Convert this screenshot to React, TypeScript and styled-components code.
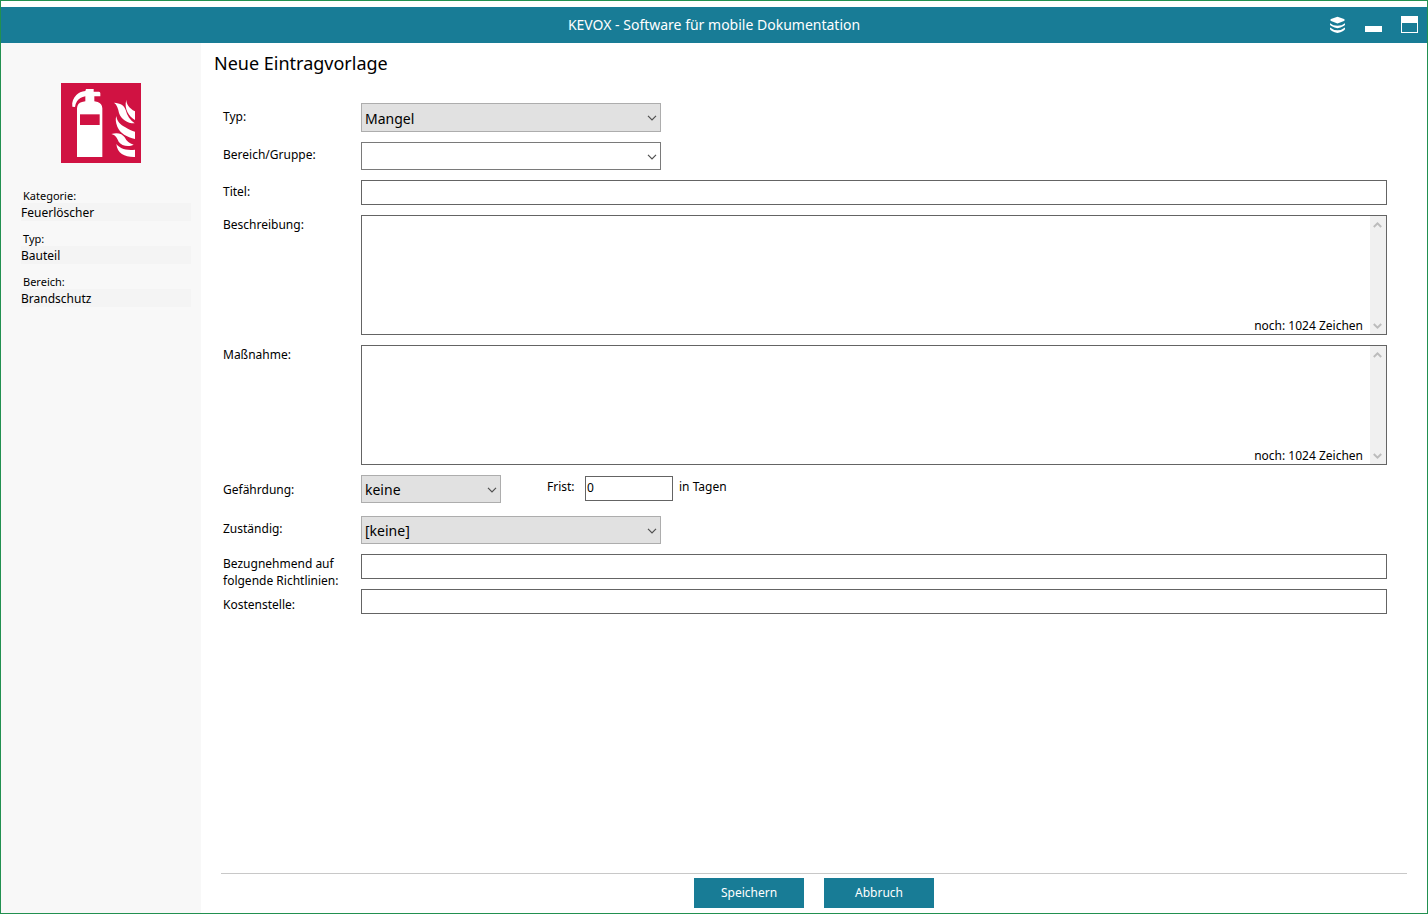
import React from "react";
import styled, { createGlobalStyle } from "styled-components";

const GlobalStyle = createGlobalStyle`
  *, *::before, *::after { box-sizing: border-box; }
  body { margin: 0; background: #fff; }
  body, button, input, select, textarea {
    font-family: "Noto Sans", "Open Sans", sans-serif;
    color: #000;
  }
`;

const teal = "#187c96";

const Window = styled.div`
  min-height: 100vh;
  display: flex;
  flex-direction: column;
  padding-top: 6px;
  border: 1px solid #229050;
`;

const TitleBar = styled.header`
  display: grid;
  grid-template-columns: 1fr auto 1fr;
  align-items: center;
  height: 36px;
  padding: 0 9px;
  background: ${teal};
`;

const AppName = styled.div`
  grid-column: 2;
  color: #fff;
  font-size: 14px;
  line-height: 20px;
`;

const WindowControls = styled.div`
  display: flex;
  justify-content: flex-end;
  gap: 18px;
`;

const IconButton = styled.button`
  width: 18px;
  height: 18px;
  padding: 0;
  border: 0;
  background: none;
  svg { display: block; }
`;

const Body = styled.div`
  flex: 1;
  display: flex;
`;

const Sidebar = styled.aside`
  flex: none;
  width: 200px;
  padding: 40px 10px 0 20px;
  background: #f8f8f8;
`;

const SignIcon = styled.svg`
  display: block;
  width: 80px;
  height: 80px;
  margin: 0 0 24px 40px;
`;

const Facts = styled.dl`
  display: flex;
  flex-direction: column;
  gap: 9px;
  margin: 0;
`;

const FactName = styled.dt`
  padding: 1px 0 0 2px;
  font-size: 11px;
  line-height: 15px;
`;

const FactValue = styled.dd`
  margin: 0;
  padding-top: 1px;
  background: #f4f4f4;
  font-size: 12px;
  line-height: 17px;
`;

const Main = styled.main`
  flex: 1;
  min-width: 0;
  display: flex;
  flex-direction: column;
`;

const Heading = styled.h1`
  margin: 0;
  padding: 8px 13px 0;
  font-size: 18px;
  font-weight: 400;
  line-height: 24px;
`;

const Form = styled.form`
  flex: 1;
  display: flex;
  flex-direction: column;
`;

const Fields = styled.div`
  flex: 1;
  display: flex;
  flex-direction: column;
  gap: 10px;
  padding: 28px 40px 0 22px;
`;

const Row = styled.div<{ $height?: number }>`
  display: grid;
  grid-template-columns: 138px 1fr;
  height: ${(p) => p.$height ?? 28}px;
`;

const Label = styled.label<{ $align?: string }>`
  align-self: ${(p) => p.$align ?? "center"};
  padding: ${(p) => (p.$align ? "1px 0" : "0 0 3px")};
  font-size: 12px;
  line-height: 17px;
`;

const SelectBox = styled.div<{ $width: number }>`
  display: grid;
  width: ${(p) => p.$width}px;
  height: 100%;
  > * { grid-area: 1 / 1; }
  > svg {
    align-self: center;
    justify-self: end;
    margin: 1px 4px 0 0;
    pointer-events: none;
  }
`;

const Select = styled.select<{ $plain?: boolean }>`
  appearance: none;
  width: 100%;
  height: 100%;
  padding: 1px 20px 0 3px;
  border: 1px solid ${(p) => (p.$plain ? "#7a7a7a" : "#adadad")};
  border-radius: 0;
  background: ${(p) => (p.$plain ? "#fff" : "#e1e1e1")};
  font-size: 14px;
`;

const TextInput = styled.input`
  display: block;
  width: 100%;
  height: 25px;
  padding: 0 1px 2px;
  border: 1px solid #646464;
  border-radius: 0;
  background: #fff;
  font-size: 12px;
`;

const TextBox = styled.div`
  position: relative;
  display: flex;
  border: 1px solid #646464;
`;

const TextArea = styled.textarea`
  flex: 1;
  padding: 2px;
  border: 0;
  resize: none;
  overflow: hidden;
  font-size: 12px;
`;

const Counter = styled.span`
  position: absolute;
  right: 23px;
  bottom: 0;
  font-size: 12px;
  line-height: 17px;
`;

const ScrollTrack = styled.div`
  display: flex;
  flex-direction: column;
  justify-content: space-between;
  align-items: flex-start;
  width: 16px;
  padding: 6px 3px 5px;
  background: #f0f0f0;
`;

const DeadlineRow = styled.div`
  display: flex;
  align-items: flex-start;
`;

const Deadline = styled.div`
  display: flex;
  align-items: center;
  margin-left: 46px;
  padding-top: 1px;
`;

const DeadlineLabel = styled.label`
  width: 38px;
  padding-bottom: 4px;
  font-size: 12px;
  line-height: 17px;
`;

const DaysBox = styled.div`
  width: 88px;
`;

const Unit = styled.span`
  padding: 0 0 4px 6px;
  font-size: 12px;
  line-height: 17px;
`;

const HazardSelect = styled.div`
  height: 28px;
`;

const Footer = styled.footer`
  display: flex;
  justify-content: center;
  gap: 20px;
  margin: 0 20px;
  padding: 4px 0 5px;
  border-top: 1px solid #c8c8c8;
`;

const Button = styled.button`
  width: 110px;
  height: 30px;
  padding: 0 0 1px;
  border: 0;
  background: ${teal};
  color: #fff;
  font-size: 12px;
`;

const Chevron = () => (
  <svg width="10" height="6" viewBox="0 0 10 6" fill="none" stroke="#505050" strokeWidth="1.2">
    <path d="M1 .8 5 4.8 9 .8" />
  </svg>
);

const ScrollArrow = ({ up }: { up?: boolean }) => (
  <svg width="9" height="6" viewBox="0 0 9 6" fill="none" stroke="#bcbcbc" strokeWidth="2">
    <path d={up ? "M.8 5 4.5 1.4 8.2 5" : "M.8 1 4.5 4.6 8.2 1"} />
  </svg>
);

const FireExtinguisher = () => (
  <SignIcon viewBox="33 27 240 240" role="img" aria-label="Feuerlöscher">
    <rect x="33" y="27" width="240" height="240" fill="#d01242" />
    <g fill="#fff">
      <path d="M81 249V103Q82 87 96 84L106 82V67C95 69 86 74 81 82Q76 90 75 99L67 98C65 84 70 72 79 63Q89 53 106 51L108 45H131V53H147Q151 54 151 58V67H133V82L143 84Q156 88 157 103V249Z" />
      <path d="M229 77C229 91 237 102 255 112V138C237 127 221 105 229 77Z" />
      <path d="M192 86C211 87 223 94 227 108C231 125 241 139 254 148C235 149 213 137 207 117C204 103 201 92 192 86Z" />
      <path d="M199 126C201 142 211 152 226 160C236 166 246 171 255 173V195C231 189 210 178 202 158C197 145 196 135 199 126Z" />
      <path d="M184 180C202 174 217 179 224 190C230 202 238 209 251 212C237 219 214 216 206 203C201 191 196 183 184 180Z" />
      <path d="M199 210C208 222 224 230 255 227V249C225 250 202 239 199 210Z" />
    </g>
    <rect x="90" y="121" width="59" height="32" fill="#d01242" />
  </SignIcon>
);

const facts = [
  ["Kategorie:", "Feuerlöscher"],
  ["Typ:", "Bauteil"],
  ["Bereich:", "Brandschutz"],
];

function Dropdown({ id, value, width, plain }: { id: string; value: string; width: number; plain?: boolean }) {
  return (
    <SelectBox $width={width}>
      <Select id={id} $plain={plain} defaultValue={value}>
        <option>{value}</option>
      </Select>
      <Chevron />
    </SelectBox>
  );
}

function LongText({ id, label }: { id: string; label: string }) {
  return (
    <Row $height={120}>
      <Label htmlFor={id} $align="start">{label}</Label>
      <TextBox>
        <TextArea id={id} maxLength={1024} />
        <Counter>noch: 1024 Zeichen</Counter>
        <ScrollTrack aria-hidden="true">
          <ScrollArrow up />
          <ScrollArrow />
        </ScrollTrack>
      </TextBox>
    </Row>
  );
}

export default function App() {
  return (
    <>
      <GlobalStyle />
      <Window>
        <TitleBar>
          <AppName>KEVOX - Software für mobile Dokumentation</AppName>
          <WindowControls>
            <IconButton type="button" aria-label="Ebenen">
              <svg width="18" height="18" viewBox="0 0 18 18" fill="#fff">
                <path d="M9.500 .8 16 3Q17.600 4 16 5L9.500 7.500 3 5Q1.400 4 3 3Z" />
                <path d="M2 7.200Q5 9.800 9.500 9.800T17 7.200V8.800Q16 10.600 9.500 12.300Q3 10.600 2 8.800Z" />
                <path d="M2 11.600Q5 14.300 9.500 14.300T17 11.600V13.200Q16 15.300 9.500 17Q3 15.300 2 13.200Z" />
              </svg>
            </IconButton>
            <IconButton type="button" aria-label="Minimieren">
              <svg width="18" height="18" viewBox="0 0 18 18">
                <path d="M1 10H18V16H1Z" fill="#fff" />
              </svg>
            </IconButton>
            <IconButton type="button" aria-label="Maximieren">
              <svg width="18" height="18" viewBox="0 0 18 18">
                <path d="M1 0H18V17H1ZM2 7V16H17V7Z" fill="#fff" fillRule="evenodd" />
              </svg>
            </IconButton>
          </WindowControls>
        </TitleBar>
        <Body>
          <Sidebar>
            <FireExtinguisher />
            <Facts>
              {facts.map(([name, value]) => (
                <div key={name}>
                  <FactName>{name}</FactName>
                  <FactValue>{value}</FactValue>
                </div>
              ))}
            </Facts>
          </Sidebar>
          <Main>
            <Heading>Neue Eintragvorlage</Heading>
            <Form onSubmit={(e) => e.preventDefault()}>
              <Fields>
                <Row $height={29}>
                  <Label htmlFor="typ">Typ:</Label>
                  <Dropdown id="typ" value="Mangel" width={300} />
                </Row>
                <Row>
                  <Label htmlFor="bereich">Bereich/Gruppe:</Label>
                  <Dropdown id="bereich" value="" width={300} plain />
                </Row>
                <Row $height={25}>
                  <Label htmlFor="titel">Titel:</Label>
                  <TextInput id="titel" />
                </Row>
                <LongText id="beschreibung" label="Beschreibung:" />
                <LongText id="massnahme" label="Maßnahme:" />
                <Row $height={31}>
                  <Label htmlFor="gefaehrdung">Gefährdung:</Label>
                  <DeadlineRow>
                    <HazardSelect>
                      <Dropdown id="gefaehrdung" value="keine" width={140} />
                    </HazardSelect>
                    <Deadline>
                      <DeadlineLabel htmlFor="frist">Frist:</DeadlineLabel>
                      <DaysBox>
                        <TextInput id="frist" defaultValue="0" />
                      </DaysBox>
                      <Unit>in Tagen</Unit>
                    </Deadline>
                  </DeadlineRow>
                </Row>
                <Row>
                  <Label htmlFor="zustaendig">Zuständig:</Label>
                  <Dropdown id="zustaendig" value="[keine]" width={300} />
                </Row>
                <Row $height={25}>
                  <Label htmlFor="richtlinien" $align="start">
                    Bezugnehmend auf
                    <br />
                    folgende Richtlinien:
                  </Label>
                  <TextInput id="richtlinien" />
                </Row>
                <Row $height={25}>
                  <Label htmlFor="kostenstelle" $align="end">Kostenstelle:</Label>
                  <TextInput id="kostenstelle" />
                </Row>
              </Fields>
              <Footer>
                <Button type="submit">Speichern</Button>
                <Button type="button">Abbruch</Button>
              </Footer>
            </Form>
          </Main>
        </Body>
      </Window>
    </>
  );
}
